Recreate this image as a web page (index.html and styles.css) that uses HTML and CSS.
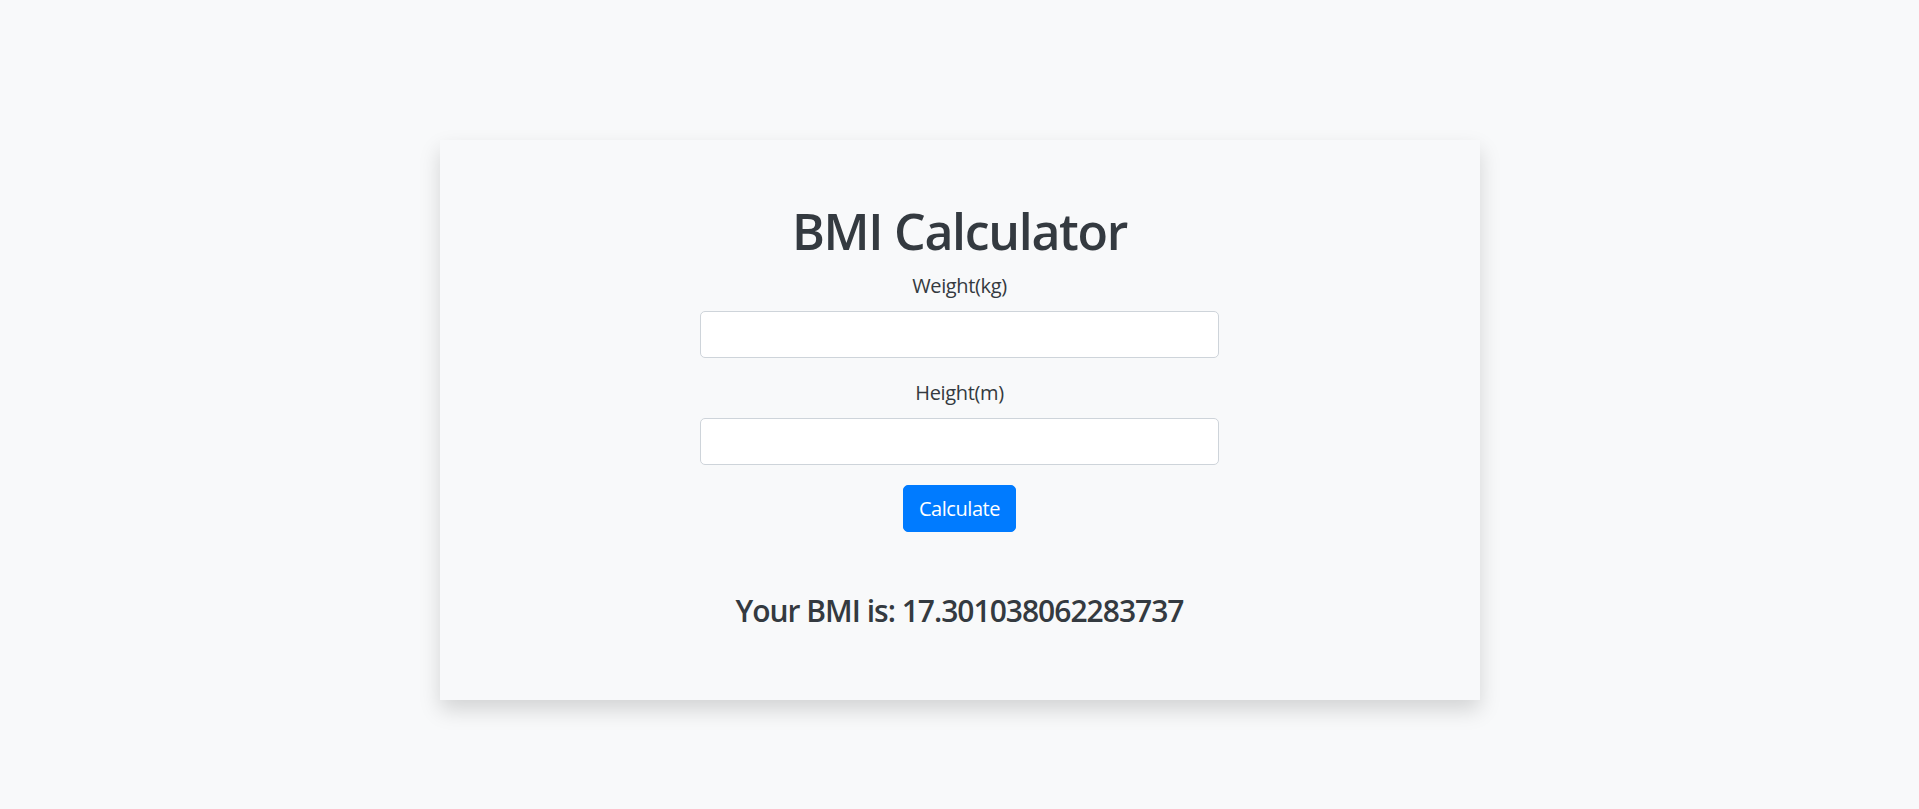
FILE: index.html
```html
<!DOCTYPE html>
<html lang="en">
<head>
<meta charset="utf-8">
<title>BMI Calculator</title>
<link rel="stylesheet" href="styles.css">
</head>
<body>
  <main class="card">
    <h1 class="title">BMI Calculator</h1>
    <form class="form">
      <div class="group">
        <label class="label" for="weight">Weight(kg)</label>
        <input class="input" id="weight" type="text">
      </div>
      <div class="group">
        <label class="label" for="height">Height(m)</label>
        <input class="input" id="height" type="text">
      </div>
      <button class="btn" type="button">Calculate</button>
    </form>
    <h4 class="result">Your BMI is: 17.301038062283737</h4>
  </main>
</body>
</html>
```
FILE: styles.css
```css
html, body {
  margin: 0;
  padding: 0;
}
body {
  box-sizing: border-box;
  min-height: 100vh;
  padding-top: 140px;
  background: #f8f9fa;
  font-family: "Open Sans", "Noto Sans", sans-serif;
  color: #343a40;
  font-size: 20px;
  line-height: 1.5;
}
.card {
  box-sizing: border-box;
  width: 1040px;
  height: 560px;
  margin: 0 auto;
  padding: 61px 0 0;
  background: #f8f9fa;
  box-shadow: 0 10px 20px rgba(0, 0, 0, 0.15);
  display: flex;
  flex-direction: column;
  align-items: center;
}
.title {
  margin: 0 0 10px;
  font-size: 50px;
  line-height: 60px;
  font-weight: 600;
  letter-spacing: -1.3px;
  color: #343a40;
}
.form {
  width: 519px;
  display: flex;
  flex-direction: column;
  align-items: center;
}
.group {
  width: 100%;
  display: flex;
  flex-direction: column;
  align-items: center;
  margin-bottom: 20px;
}
.label {
  font-size: 20px;
  line-height: 30px;
  margin-bottom: 10px;
  letter-spacing: -0.35px;
  color: #343a40;
}
.input {
  box-sizing: border-box;
  width: 100%;
  height: 47px;
  border: 1px solid #ced4da;
  border-radius: 5px;
  background: #fff;
  font: inherit;
  padding: 7px 15px;
}
.btn {
  box-sizing: border-box;
  height: 47px;
  padding: 7px 15px;
  border: 1px solid #007bff;
  border-radius: 5px;
  background: #007bff;
  color: #fff;
  font-family: inherit;
  font-size: 20px;
  line-height: 30px;
  letter-spacing: -0.45px;
}
.result {
  margin: 61px 0 0;
  font-size: 30px;
  line-height: 36px;
  font-weight: 600;
  letter-spacing: -1px;
  color: #343a40;
}
```
